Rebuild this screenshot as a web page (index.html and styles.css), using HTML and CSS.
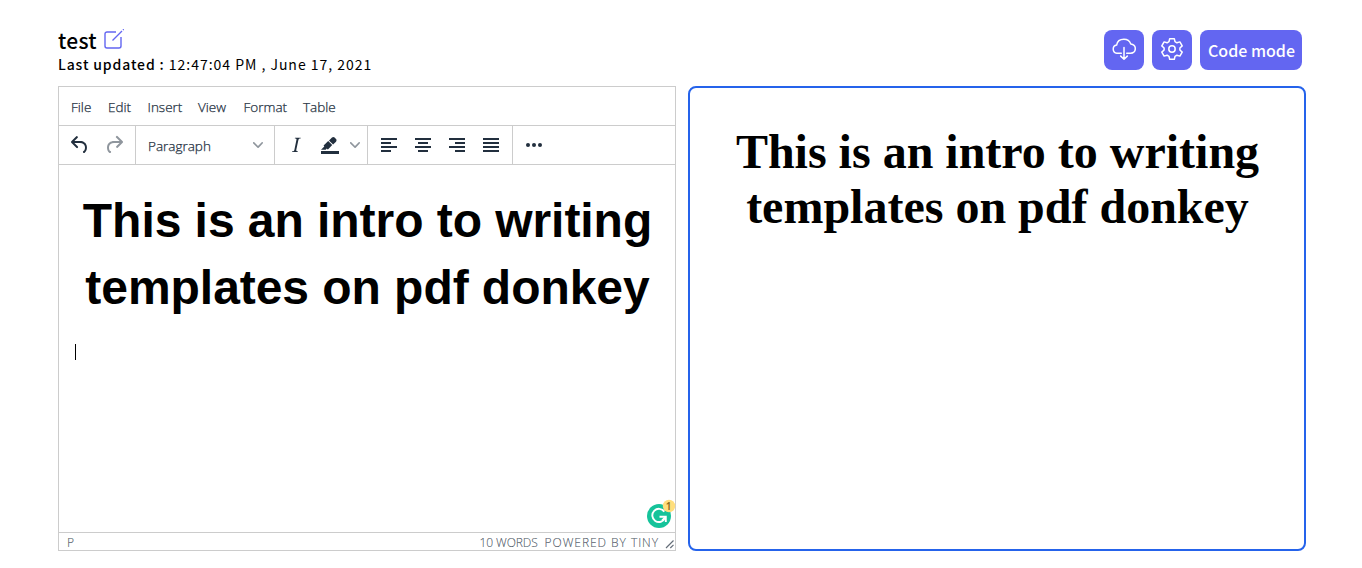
FILE: index.html
```html
<!DOCTYPE html>
<html lang="en">
<head>
<meta charset="utf-8">
<title>test</title>
<link rel="stylesheet" href="styles.css">
</head>
<body>
<header class="top">
  <div class="doc">
    <div class="doc-title"><span class="doc-name">test</span>
      <svg class="edit" width="20" height="20" viewBox="0 0 20 20" fill="none" stroke="#6366f1" stroke-width="1.4"><path d="M12 3H3a2 2 0 0 0-2 2v12a2 2 0 0 0 2 2h12a2 2 0 0 0 2-2V8"/><path d="M8.500 11.500 18 2M19 1l.8-.8"/></svg>
    </div>
    <div class="updated"><b>Last updated :</b> 12:47:04 PM , June 17, 2021</div>
  </div>
  <div class="actions">
    <button class="btn icon"><svg width="24" height="24" viewBox="0 0 24 24" fill="none" stroke="#fff" stroke-width="1.5" stroke-linecap="round" stroke-linejoin="round"><path d="M9.300 16.200H4.800A4.100 4.100 0 0 1 4.600 8.100C5.200 4.500 8.300 2.300 11.900 2.300c3.200 0 5.900 1.900 6.900 4.700 2.600.3 4.500 2.200 4.500 4.600 0 2.700-2 4.600-4.700 4.600H14.700M12 10.500V22M8.700 19.100 12 22.200l3.300-3.100"/></svg></button>
    <button class="btn icon"><svg width="24" height="24" viewBox="0 0 24 24" fill="none" stroke="#fff" stroke-width="1.500" stroke-linejoin="round"><path d="M9.700 1.700h4.600l.7 3 1.900 1.100 3-.9 2.300 4-2.300 2.100v2l2.300 2.100-2.300 4-3-.9-1.900 1.100-.7 3H9.700l-.7-3-1.900-1.100-3 .9-2.300-4L4.100 13v-2L1.800 8.900l2.300-4 3 .9L9 4.700z"/><circle cx="12" cy="12" r="3.200"/></svg></button>
    <button class="btn label">Code mode</button>
  </div>
</header>
<main class="panes">
  <section class="editor">
    <nav class="menu"><span class="m1">File</span><span class="m2">Edit</span><span class="m3">Insert</span><span class="m4">View</span><span class="m5">Format</span><span class="m6">Table</span></nav>
    <div class="toolbar">
      <div class="group history">
        <svg class="ic" viewBox="0 0 24 24"><path d="M6.400 8H12c3.700 0 6.200 2 6.800 5.100.6 2.700-.4 5.600-2.300 6.800a1 1 0 0 1-1-1.800c1.100-.6 1.800-2.700 1.400-4.600-.5-2.100-2.100-3.500-4.900-3.500H6.400l3.300 3.300a1 1 0 1 1-1.400 1.400l-5-5a1 1 0 0 1 0-1.400l5-5a1 1 0 0 1 1.400 1.400L6.400 8z"/></svg>
        <svg class="ic off" viewBox="0 0 24 24"><path d="M17.600 10H12c-2.800 0-4.400 1.400-4.900 3.500-.4 2 .3 4 1.400 4.600a1 1 0 1 1-1 1.800c-2-1.200-2.900-4.100-2.300-6.800.6-3 3-5.100 6.800-5.100h5.600l-3.300-3.300a1 1 0 1 1 1.400-1.400l5 5a1 1 0 0 1 0 1.400l-5 5a1 1 0 0 1-1.400-1.400l3.300-3.300z"/></svg>
      </div>
      <div class="group format"><span>Paragraph</span><svg class="chev" viewBox="0 0 10 10"><path d="M8.700 2.200c.3-.3.8-.3 1 0 .4.4.4.9 0 1.200L5.700 7.800c-.3.3-.9.3-1.200 0L.2 3.400a.8.8 0 0 1 0-1.200c.3-.3.8-.3 1.100 0L5 6l3.700-3.800z"/></svg></div>
      <div class="group style">
        <svg class="ic" viewBox="0 0 24 24"><path d="M16.700 4.700l-.1.9h-.3c-.6 0-1 0-1.400.3-.3.3-.4.6-.5 1.100l-2.100 9.800v.6c0 .5.4.8 1.400.8h.2l-.2.8H8l.2-.8h.2c1.100 0 1.800-.5 2-1.500l2-9.800.1-.5c0-.6-.4-.8-1.400-.8h-.3l.2-.9h5.700z"/></svg>
        <svg class="ic" viewBox="0 0 24 24"><path d="M3 18h18v3H3z"/><path d="M7.700 16.700H3l3.300-3.300-.7-.8L10.200 8l4 4.100-4 4.200c-.2.2-.6.2-.8 0l-.6-.7-1.100 1.100zm5-7.500L11 7.400l3-2.900a2 2 0 0 1 2.600 0L18 6c.7.7.7 2 0 2.700l-2.900 2.900-1.800-1.800-.5-.6"/></svg>
        <svg class="chev" viewBox="0 0 10 10"><path d="M8.700 2.200c.3-.3.8-.3 1 0 .4.4.4.9 0 1.200L5.700 7.800c-.3.3-.9.3-1.200 0L.2 3.400a.8.8 0 0 1 0-1.200c.3-.3.8-.3 1.100 0L5 6l3.700-3.800z"/></svg>
      </div>
      <div class="group align">
        <svg class="ic line" viewBox="0 0 24 24"><path d="M5 6h14M5 10h8M5 14h14M5 18h8"/></svg>
        <svg class="ic line" viewBox="0 0 24 24"><path d="M5 6h14M8 10h8M5 14h14M8 18h8"/></svg>
        <svg class="ic line" viewBox="0 0 24 24"><path d="M5 6h14M11 10h8M5 14h14M11 18h8"/></svg>
        <svg class="ic line" viewBox="0 0 24 24"><path d="M5 6h14M5 10h14M5 14h14M5 18h14"/></svg>
      </div>
      <div class="group more"><svg class="ic" viewBox="0 0 24 24"><circle cx="6" cy="12" r="2"/><circle cx="12" cy="12" r="2"/><circle cx="18" cy="12" r="2"/></svg></div>
    </div>
    <div class="content">
      <h1>This is an intro to writing<br>templates on pdf donkey</h1>
      <div class="caret"></div>
      <svg class="grammar" width="32" height="32" viewBox="0 0 32 32"><circle cx="14" cy="17" r="12" fill="#15c39a"/><path d="M19.300 12.600A6.600 6.600 0 1 0 20 19" fill="none" stroke="#fff" stroke-width="1.900"/><path d="M14.500 17.700h6.300v5.200" fill="none" stroke="#fff" stroke-width="1.900"/><path d="m17 21.300 3-3" stroke="#fff" stroke-width="1.500"/><circle cx="24" cy="7" r="6.200" fill="#ffde7d"/><text x="23.500" y="10.500" text-anchor="middle">1</text></svg>
    </div>
    <footer class="status"><span class="path">P</span><span class="words">10 WORDS</span><span class="brand">POWERED BY TINY</span><svg class="grip" viewBox="0 0 10 10"><path d="M1 9 8.500 1.500M5.300 9 8.500 5.800"/></svg></footer>
  </section>
  <section class="preview"><h1>This is an intro to writing<br>templates on pdf donkey</h1></section>
</main>
</body>
</html>
```
FILE: styles.css
```css
* { box-sizing: border-box; }
body { margin: 0; height: 568px; padding: 30px 56px 0 58px; background: #fff; color: #000; font-family: "Noto Sans CJK SC", sans-serif; overflow: hidden; }
svg { display: block; flex: none; }
.top { display: flex; justify-content: space-between; height: 56px; padding-right: 4px; }
.doc-title { display: flex; height: 20px; align-items: center; gap: 7px; }
.doc-name { font-size: 21px; font-weight: 500; line-height: 20px; letter-spacing: .3px; }
.edit { margin-top: -2px; }
.updated { margin-top: 2px; font-size: 14px; line-height: 24px; letter-spacing: .98px; white-space: nowrap; }
.updated b { font-weight: 500; letter-spacing: .87px; }
.actions { display: flex; gap: 8px; }
.btn { height: 40px; border: 0; border-radius: 8px; padding: 0; background: #6366f1; color: #fff; display: flex; align-items: center; justify-content: center; font: 500 16px "Noto Sans CJK SC", sans-serif; }
.btn.icon { width: 40px; }
.btn.label { width: 102px; padding-left: 1px; }
.btn svg { margin-top: -2px; }
.panes { display: flex; gap: 12px; }
.editor { width: 618px; height: 465px; border: 1px solid #ccc; display: flex; flex-direction: column; font-family: "Open Sans", "Noto Sans", sans-serif; font-weight: 300; }
.menu { height: 39px; border-bottom: 1px solid #ccc; display: flex; align-items: center; padding: 2px 0 0 12px; font-size: 13.5px; color: #222f3e; -webkit-text-stroke: .25px #222f3e; }
.menu span { flex: none; white-space: nowrap; }
.m1 { width: 37px; } .m2 { width: 39.5px; } .m3 { width: 50.5px; } .m4 { width: 45.5px; } .m5 { width: 59.5px; } .m6 { width: 40px; }
.toolbar { height: 39px; border-bottom: 1px solid #ccc; display: flex; }
.group { display: flex; align-items: center; border-right: 1px solid #ccc; gap: 10px; padding: 0 9px 1px; }
.ic { width: 24px; height: 24px; fill: #222f3e; }
.off { opacity: .5; }
.line { stroke: #222f3e; stroke-width: 2; fill: none; }
.chev { width: 10px; height: 10px; fill: #222f3e; opacity: .5; }
.history { width: 77px; }
.format { width: 139px; padding-left: 12px; padding-right: 11px; justify-content: space-between; font-size: 13.5px; color: #222f3e; }
.format span { padding-top: 3px; -webkit-text-stroke: .25px #222f3e; }
.style { width: 93px; padding-right: 0; }
.style .chev { margin-left: -2px; }
.align { width: 145px; }
.line { stroke-linecap: square; }
.more { border: 0; }
.content { flex: 1; position: relative; padding: 22px 16px 0 17px; }
.content h1 { margin: 0; font: bold 48px/67px "Liberation Sans", Arial, sans-serif; letter-spacing: -.05px; text-align: center; white-space: nowrap; }
.caret { width: 1px; height: 16px; margin: 23px 0 0 -1px; background: #000; }
.grammar { position: absolute; right: -2px; bottom: 1px; }
.grammar text { font: 600 10px "Noto Sans", sans-serif; fill: #8b6a1c; }
.status { height: 18px; border-top: 1px solid #ccc; display: flex; align-items: center; padding: 2px 0 0 8px; font-size: 12px; line-height: 16px; color: #222f3eb3; -webkit-text-stroke: .2px #222f3eb3; white-space: nowrap; }
.words { margin-left: auto; letter-spacing: -.1px; }
.brand { margin-left: 7px; letter-spacing: .95px; }
.grip { width: 10px; height: 10px; margin: 2px 0 0 6px; stroke: #222f3eb3; stroke-width: 1.2; }
.preview { width: 618px; height: 465px; border: 2px solid #2563eb; border-radius: 8px; padding: 36px 0 0 1px; }
.preview h1 { margin: 0; font: bold 48px/55px "Liberation Serif", "Times New Roman", serif; text-align: center; white-space: nowrap; }
```
